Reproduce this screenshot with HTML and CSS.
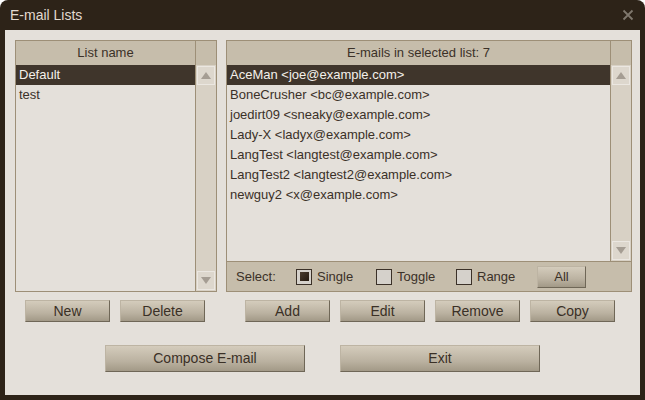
FILE: index.html
```html
<!DOCTYPE html>
<html>
<head>
<meta charset="utf-8">
<link rel="stylesheet" href="styles.css">
</head>
<body>
<div class="window">
  <div class="titlebar">
    <span class="title">E-mail Lists</span>
    <svg class="close" width="12" height="12" viewBox="0 0 12 12"><path d="M1.5 1.5 L10.5 10.5 M10.5 1.5 L1.5 10.5" stroke="#7f776d" stroke-width="1.8" stroke-linecap="butt"/></svg>
  </div>
  <div class="content">
    <div class="panels">
      <div class="panel panel-left">
        <div class="header">List name</div>
        <div class="scroll-head"></div>
        <div class="list">
          <div class="row selected">Default</div>
          <div class="row">test</div>
        </div>
        <div class="scrollbar">
          <div class="sbtn"><span class="tri up"></span></div>
          <div class="track"></div>
          <div class="sbtn"><span class="tri down"></span></div>
        </div>
      </div>
      <div class="panel panel-right">
        <div class="header">E-mails in selected list: 7</div>
        <div class="scroll-head"></div>
        <div class="list">
          <div class="row selected">AceMan &lt;joe@example.com&gt;</div>
          <div class="row">BoneCrusher &lt;bc@example.com&gt;</div>
          <div class="row">joedirt09 &lt;sneaky@example.com&gt;</div>
          <div class="row">Lady-X &lt;ladyx@example.com&gt;</div>
          <div class="row">LangTest &lt;langtest@example.com&gt;</div>
          <div class="row">LangTest2 &lt;langtest2@example.com&gt;</div>
          <div class="row">newguy2 &lt;x@example.com&gt;</div>
        </div>
        <div class="scrollbar">
          <div class="sbtn"><span class="tri up"></span></div>
          <div class="track"></div>
          <div class="sbtn"><span class="tri down"></span></div>
        </div>
        <div class="selectbar">
          <span class="select-label">Select:</span>
          <span class="opt"><span class="box checked"><span class="mark"></span></span>Single</span>
          <span class="opt"><span class="box"></span>Toggle</span>
          <span class="opt"><span class="box"></span>Range</span>
          <button class="btn btn-all">All</button>
        </div>
      </div>
    </div>
    <div class="btnrow">
      <div class="group group-left">
        <button class="btn">New</button>
        <button class="btn">Delete</button>
      </div>
      <div class="group group-right">
        <button class="btn">Add</button>
        <button class="btn">Edit</button>
        <button class="btn">Remove</button>
        <button class="btn">Copy</button>
      </div>
    </div>
    <div class="btnrow2">
      <button class="btn btn-big">Compose E-mail</button>
      <button class="btn btn-big">Exit</button>
    </div>
  </div>
</div>
</body>
</html>
```

FILE: styles.css
```css
html, body {
  margin: 0;
  padding: 0;
  background: #ffffff;
}
body {
  font-family: "Liberation Sans", Arial, sans-serif;
  color: #3b3128;
}
.window {
  width: 645px;
  height: 400px;
  background: #2d2318;
  border-radius: 8px 8px 0 0;
  display: flex;
  flex-direction: column;
  box-sizing: border-box;
  padding: 0 5px 5px 5px;
}
.titlebar {
  height: 30px;
  flex: none;
  display: flex;
  align-items: center;
  justify-content: space-between;
  padding: 0 6px 0 5px;
}
.title {
  color: #e2dad0;
  font-size: 14px;
  line-height: 16px;
  padding-bottom: 1px;
}
.close {
  display: block;
}
.content {
  flex: 1;
  background: #e4e0da;
  padding: 10px 8px 0 10px;
}
.panels {
  display: grid;
  grid-template-columns: 202px 406px;
  column-gap: 9px;
}
.panel {
  border: 1px solid #9d8f77;
  height: 250px;
  display: grid;
}
.panel-left {
  grid-template-columns: 179px 21px;
  grid-template-rows: 24px 226px;
}
.panel-right {
  grid-template-columns: 383px 21px;
  grid-template-rows: 24px 196px 30px;
}
.header {
  background: #c6bdab;
  font-size: 13px;
  line-height: 24px;
  text-align: center;
  color: #3b3128;
}
.scroll-head {
  background: #c6bdab;
  border-left: 1px solid #9d8f77;
}
.list {
  overflow: hidden;
}
.row {
  height: 20px;
  line-height: 20px;
  font-size: 13px;
  padding-left: 3px;
  white-space: nowrap;
  color: #3b3128;
}
.row.selected {
  background: #3f352b;
  color: #f4f0ea;
}
.scrollbar {
  border-left: 1px solid #9d8f77;
  background: #d8d1c5;
  display: flex;
  flex-direction: column;
  padding: 1px;
}
.sbtn {
  height: 17px;
  flex: none;
  background: #ddd7cd;
  border: 1px solid #ebe7e1;
  display: flex;
  align-items: center;
  justify-content: center;
}
.track {
  flex: 1;
}
.tri {
  display: block;
  width: 0;
  height: 0;
  border-left: 5px solid transparent;
  border-right: 5px solid transparent;
}
.tri.up {
  border-bottom: 7px solid #a59d93;
}
.tri.down {
  border-top: 7px solid #a59d93;
}
.selectbar {
  grid-column: 1 / 3;
  background: #c6bdab;
  border-top: 1px solid #9d8f77;
  display: flex;
  align-items: center;
  padding-left: 9px;
  font-size: 13px;
}
.select-label {
  width: 60px;
  flex: none;
}
.opt {
  width: 80px;
  flex: none;
  display: flex;
  align-items: center;
  gap: 5px;
}
.box {
  width: 14px;
  height: 14px;
  border: 1px solid #3b3128;
  background: #d5d1cb;
  display: flex;
  align-items: center;
  justify-content: center;
  flex: none;
}
.mark {
  width: 9px;
  height: 9px;
  background: linear-gradient(135deg, #4a3c2e, #24190f);
}
.btn {
  font-family: "Liberation Sans", Arial, sans-serif;
  font-size: 14px;
  color: #3a3026;
  background: linear-gradient(#d4ccbc, #bbb2a1 60%, #a29987);
  border: 1px solid;
  border-color: #bdb4a3 #6f6757 #6f6757 #bdb4a3;
  width: 85px;
  height: 22px;
  padding: 0;
  margin: 0;
  line-height: 20px;
  box-sizing: border-box;
}
.btn-all {
  width: 49px;
  margin-left: 1px;
  font-size: 13px;
}
.btnrow {
  display: grid;
  grid-template-columns: 202px 406px;
  column-gap: 9px;
  margin-top: 8px;
}
.group {
  display: flex;
  gap: 10px;
}
.group-left {
  padding-left: 10px;
}
.group-right {
  padding-left: 19px;
}
.btnrow2 {
  display: flex;
  gap: 35px;
  padding-left: 90px;
  margin-top: 23px;
}
.btn-big {
  width: 200px;
  height: 27px;
  line-height: 25px;
}
```
